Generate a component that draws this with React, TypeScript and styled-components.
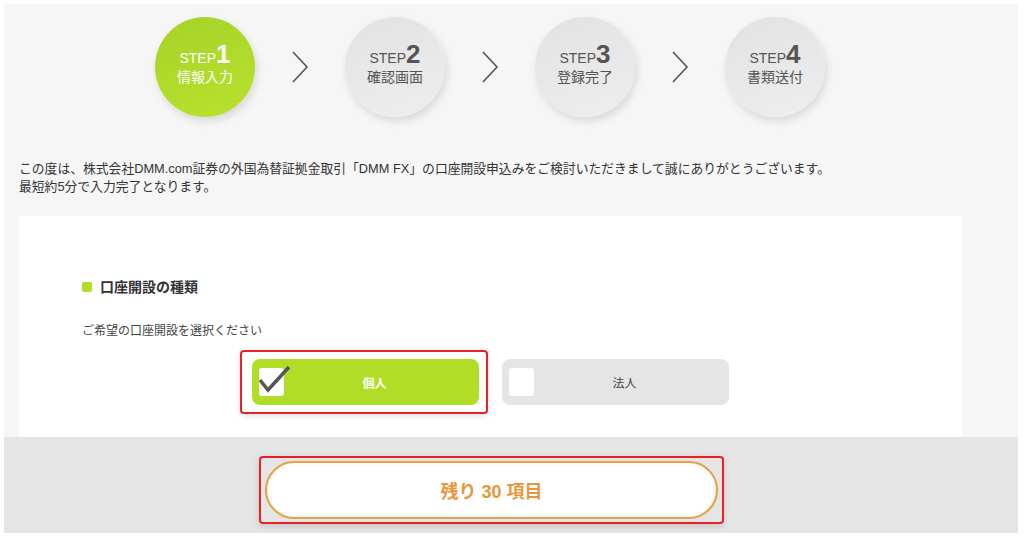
import React from "react";
import styled, { createGlobalStyle } from "styled-components";

const Global = createGlobalStyle`
  html, body { margin: 0; padding: 0; background: #fff; }
  body { font-family: Arial, "Liberation Sans", "Noto Sans CJK JP", sans-serif; color: #333; }
`;

const Frame = styled.div`
  margin: 4px 6px 6px 4px;
  width: 1014px;
  background: #f6f6f6;
  display: flex;
  flex-direction: column;
`;

const Steps = styled.div`
  display: flex;
  align-items: center;
  padding: 13px 0 0 151px;
  height: 100px;
`;

const Circle = styled.div<{ $active?: boolean }>`
  width: 100px;
  height: 100px;
  border-radius: 50%;
  display: flex;
  flex-direction: column;
  align-items: center;
  justify-content: center;
  background: ${(p) => (p.$active ? "linear-gradient(160deg, #a6d22a, #b9e22c)" : "linear-gradient(160deg, #e2e2e2, #eeeeee)")};
  color: ${(p) => (p.$active ? "#fff" : "#555")};
  box-shadow: 2px 4px 8px rgba(0, 0, 0, 0.12);
  padding-bottom: 6px;
  box-sizing: border-box;
`;

const StepLabel = styled.div`
  font-size: 14px;
  line-height: 20px;
  display: flex;
  align-items: baseline;
  span { font-size: 26px; font-weight: bold; line-height: 24px; }
`;

const StepName = styled.div`
  font-size: 14px;
  line-height: 18px;
`;

const Chevron = styled.div`
  width: 90px;
  display: flex;
  justify-content: center;
`;

const Intro = styled.p`
  margin: 43px 0 0 15px;
  font-size: 12.8px;
  line-height: 18px;
  color: #333;
`;

const Card = styled.div`
  margin: 20px 0 0 15px;
  width: 943px;
  height: 221px;
  background: #fff;
  box-sizing: border-box;
  padding: 62px 0 0 63px;
`;

const Heading = styled.h2`
  margin: 0;
  font-size: 14px;
  font-weight: bold;
  color: #333;
  display: flex;
  align-items: center;
  gap: 8px;
  line-height: 18px;
  &::before {
    content: "";
    width: 10px;
    height: 10px;
    border-radius: 2px;
    background: #b2dc28;
  }
`;

const Sub = styled.div`
  margin-top: 27px;
  font-size: 12px;
  line-height: 16px;
  color: #444;
`;

const Choices = styled.div`
  display: flex;
  gap: 23px;
  margin: 20px 0 0 170px;
`;

const Highlight = styled.div`
  border: 2px solid #e8202a;
  border-radius: 4px;
  padding: 7px 7px 7px 10px;
  margin: -9px -9px -9px -12px;
  box-shadow: 0 2px 6px rgba(0,0,0,0.12);
`;

const Choice = styled.div<{ $on?: boolean }>`
  width: 227px;
  height: 46px;
  border-radius: 8px;
  background: ${(p) => (p.$on ? "#b2dd26" : "#e5e5e5")};
  color: ${(p) => (p.$on ? "#fff" : "#444")};
  font-weight: ${(p) => (p.$on ? "bold" : "normal")};
  font-size: 12px;
  display: flex;
  align-items: center;
`;

const Box = styled.div`
  width: 25px;
  height: 28px;
  margin-left: 7px;
  background: #fff;
  border-radius: 3px;
  position: relative;
`;

const Check = styled.svg`
  position: absolute;
  left: 0;
  top: -4px;
`;

const ChoiceText = styled.div`
  flex: 1;
  text-align: center;
  margin-right: 14px;
`;

const Footer = styled.div`
  background: #e5e5e5;
  height: 96px;
  display: flex;
  align-items: flex-start;
  padding-top: 19px;
  box-sizing: border-box;
  padding-left: 255px;
`;

const NextOutline = styled.div`
  border: 2px solid #e8202a;
  border-radius: 4px;
  padding: 3px 4px 3px 4px;
  box-shadow: 0 2px 6px rgba(0,0,0,0.15);
`;

const NextButton = styled.button`
  width: 453px;
  height: 58px;
  border-radius: 29px;
  border: 2px solid #e6a14c;
  background: #fff;
  color: #e8963a;
  font-family: Arial, "Liberation Sans", "Noto Sans CJK JP", sans-serif;
  font-size: 18px;
  font-weight: bold;
  box-shadow: inset 0 0 4px rgba(0,0,0,0.08);
`;

const steps = [
  { n: "1", name: "情報入力" },
  { n: "2", name: "確認画面" },
  { n: "3", name: "登録完了" },
  { n: "4", name: "書類送付" },
];

export default function App() {
  return (
    <>
      <Global />
      <Frame>
        <Steps>
          {steps.map((s, i) => (
            <React.Fragment key={s.n}>
              <Circle $active={i === 0}>
                <StepLabel>
                  STEP<span>{s.n}</span>
                </StepLabel>
                <StepName>{s.name}</StepName>
              </Circle>
              {i < steps.length - 1 && (
                <Chevron>
                  <svg width="18" height="34" viewBox="0 0 18 34">
                    <polyline points="2,2 16,17 2,32" fill="none" stroke="#555" strokeWidth="1.6" />
                  </svg>
                </Chevron>
              )}
            </React.Fragment>
          ))}
        </Steps>
        <Intro>
          この度は、株式会社DMM.com証券の外国為替証拠金取引「DMM FX」の口座開設申込みをご検討いただきまして誠にありがとうございます。
          <br />
          最短約5分で入力完了となります。
        </Intro>
        <Card>
          <Heading>口座開設の種類</Heading>
          <Sub>ご希望の口座開設を選択ください</Sub>
          <Choices>
            <Highlight>
              <Choice $on>
                <Box>
                  <Check width="32" height="32" viewBox="0 0 32 32">
                    <polyline points="1,16 9,26 30,3" fill="none" stroke="#555" strokeWidth="3.5" />
                  </Check>
                </Box>
                <ChoiceText>個人</ChoiceText>
              </Choice>
            </Highlight>
            <Choice>
              <Box />
              <ChoiceText>法人</ChoiceText>
            </Choice>
          </Choices>
        </Card>
        <Footer>
          <NextOutline>
            <NextButton>残り 30 項目</NextButton>
          </NextOutline>
        </Footer>
      </Frame>
    </>
  );
}
